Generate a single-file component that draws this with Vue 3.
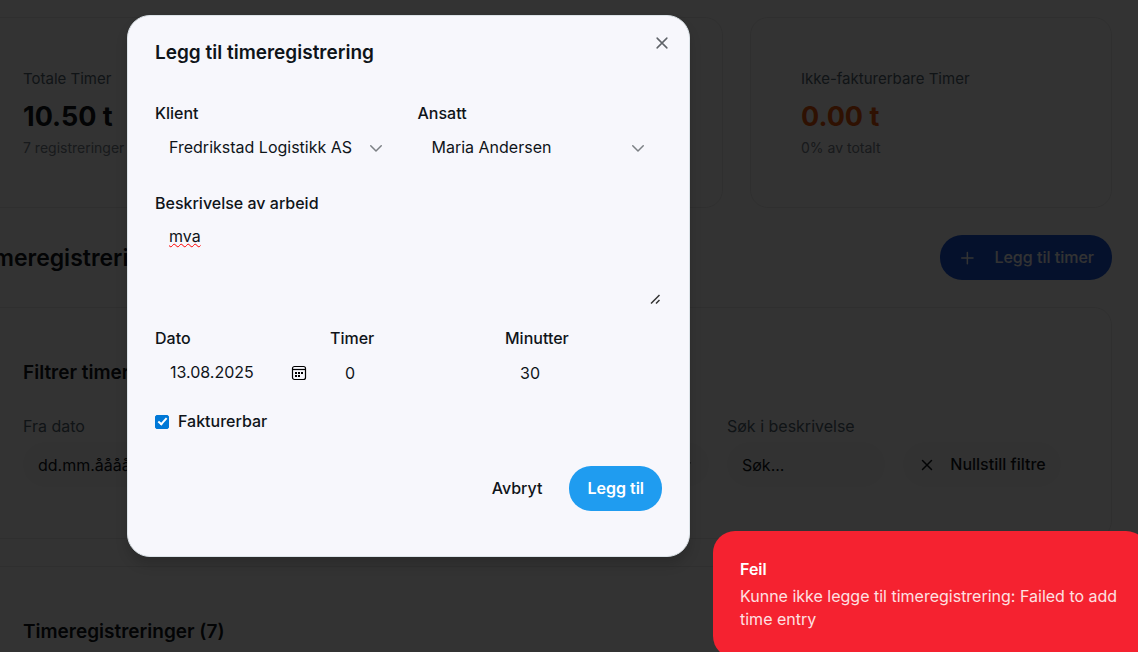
<script setup>
import { ref } from 'vue'

const stats = [
  { label: 'Totale Timer', value: '10.50 t', note: '7 registreringer', tone: 'ink' },
  { label: '', value: '', note: '', tone: 'ink' },
  { label: 'Ikke-fakturerbare Timer', value: '0.00 t', note: '0% av totalt', tone: 'orange' },
]

const client = ref('Fredrikstad Logistikk AS')
const employee = ref('Maria Andersen')
const description = ref('mva')
const date = ref('13.08.2025')
const hours = ref('0')
const minutes = ref('30')
const billable = ref(true)
</script>

<template>
  <div class="screen">
    <main class="page">
      <section class="stats">
        <article v-for="(s, i) in stats" :key="i" class="card stat">
          <p class="stat-label">{{ s.label }}</p>
          <p class="stat-value" :class="s.tone">{{ s.value }}</p>
          <p class="stat-note">{{ s.note }}</p>
        </article>
      </section>

      <div class="page-head">
        <h1>Timeregistrering</h1>
        <button type="button" class="btn add">
          <svg width="18" height="18" viewBox="0 0 24 24" fill="none" stroke="currentColor" stroke-width="2" stroke-linecap="round"><path d="M5 12h15M12.500 4.500v15" /></svg>
          Legg til timer
        </button>
      </div>

      <section class="card panel">
        <h2>Filtrer timer</h2>
        <div class="filter-grid">
          <div class="field from">
            <label for="from">Fra dato</label>
            <input id="from" class="control" type="text" value="dd.mm.åååå" />
          </div>
          <div class="field pick">
            <div class="select-wrap">
              <select class="control" aria-label="Ansatt"></select>
              <svg class="chevron" width="18" height="18" viewBox="0 0 24 24" fill="none" stroke="currentColor" stroke-width="2" stroke-linecap="round" stroke-linejoin="round"><path d="m5 9 7 7 7-7" /></svg>
            </div>
          </div>
          <div class="field search">
            <label for="search">Søk i beskrivelse</label>
            <input id="search" class="control" type="text" placeholder="Søk..." />
          </div>
          <button type="button" class="btn reset">
            <svg width="18" height="18" viewBox="0 0 24 24" fill="none" stroke="currentColor" stroke-width="2" stroke-linecap="round"><path d="M18 6 6 18M6 6l12 12" /></svg>
            Nullstill filtre
          </button>
        </div>
      </section>

      <section class="card panel">
        <h2>Timeregistreringer (7)</h2>
        <div class="rule"></div>
      </section>
    </main>

    <div class="overlay"></div>

    <form class="dialog" role="dialog" aria-labelledby="dialog-title" @submit.prevent>
      <button type="button" class="close" aria-label="Lukk">
        <svg width="18" height="18" viewBox="0 0 24 24" fill="none" stroke="currentColor" stroke-width="2" stroke-linecap="round"><path d="M18.500 5.500 5.500 18.500M5.500 5.500l13 13" /></svg>
      </button>
      <h2 id="dialog-title">Legg til timeregistrering</h2>

      <div class="row two">
        <div class="field">
          <label for="client">Klient</label>
          <div class="select-wrap">
            <select id="client" v-model="client" class="control"><option>Fredrikstad Logistikk AS</option></select>
            <svg class="chevron" width="18" height="18" viewBox="0 0 24 24" fill="none" stroke="currentColor" stroke-width="2" stroke-linecap="round" stroke-linejoin="round"><path d="m5 9 7 7 7-7" /></svg>
          </div>
        </div>
        <div class="field">
          <label for="employee">Ansatt</label>
          <div class="select-wrap">
            <select id="employee" v-model="employee" class="control"><option>Maria Andersen</option></select>
            <svg class="chevron" width="18" height="18" viewBox="0 0 24 24" fill="none" stroke="currentColor" stroke-width="2" stroke-linecap="round" stroke-linejoin="round"><path d="m5 9 7 7 7-7" /></svg>
          </div>
        </div>
      </div>

      <div class="field">
        <label for="description">Beskrivelse av arbeid</label>
        <div class="area-wrap">
          <textarea id="description" v-model="description" class="control area"></textarea>
          <svg class="grip" width="10" height="10" viewBox="0 0 10 10" fill="none" stroke="currentColor" stroke-width="1.500"><path d="M1 9.500l8.500-8.500M6 9.500l3.500-3.500" /></svg>
        </div>
      </div>

      <div class="row three">
        <div class="field">
          <label for="date">Dato</label>
          <div class="date control">
            <input id="date" v-model="date" type="text" />
            <button type="button" aria-label="Velg dato">
              <svg width="16" height="16" viewBox="0 0 16 16" fill="none" stroke="currentColor">
                <rect x="1.500" y="1.500" width="13" height="13" rx="2" stroke-width="1.200" />
                <path d="M1.500 4.500h13" stroke-width="1.200" />
                <g fill="currentColor" stroke="none">
                  <rect x="4" y="7" width="2" height="2" /><rect x="7" y="7" width="2" height="2" /><rect x="10" y="7" width="2" height="2" />
                  <rect x="4" y="10" width="2" height="2" /><rect x="7" y="10" width="2" height="2" />
                </g>
              </svg>
            </button>
          </div>
        </div>
        <div class="field">
          <label for="hours">Timer</label>
          <input id="hours" v-model="hours" class="control" type="text" inputmode="numeric" />
        </div>
        <div class="field">
          <label for="minutes">Minutter</label>
          <input id="minutes" v-model="minutes" class="control" type="text" inputmode="numeric" />
        </div>
      </div>

      <div class="check">
        <input id="billable" v-model="billable" type="checkbox" />
        <label for="billable">Fakturerbar</label>
      </div>

      <div class="actions">
        <button type="button" class="btn cancel">Avbryt</button>
        <button type="submit" class="btn submit">Legg til</button>
      </div>
    </form>

    <div class="toast" role="alert">
      <strong>Feil</strong>
      <p>Kunne ikke legge til timeregistrering: Failed to add time entry</p>
    </div>
  </div>
</template>

<style>
body {
  overflow: hidden;
  background: #fff;
}
</style>

<style scoped>
.screen {
  position: relative;
  height: 100vh;
  overflow: hidden;
  color: #0f1419;
  font: 16px/23px Inter, "Liberation Sans", sans-serif;
}
.screen *,
.screen *::before {
  box-sizing: border-box;
}
h1, h2, p {
  margin: 0;
}
h1 {
  font-size: 23px;
  font-weight: 600;
  line-height: 32px;
}
h2 {
  font-size: 19px;
  font-weight: 600;
  line-height: 28px;
}
button, input, select, textarea {
  font: inherit;
  color: inherit;
}
button {
  cursor: pointer;
}

.page {
  display: flex;
  flex-direction: column;
  gap: 27px;
  margin-left: -28px;
  padding: 17px 26px 0 0;
}
.card {
  border: 1px solid #ebebeb;
  border-radius: 18px;
  padding: 49px 50px;
}
.stats {
  display: grid;
  grid-template-columns: repeat(3, 1fr);
  gap: 27px;
}
.stat-label {
  min-height: 23px;
  font-size: 15px;
  color: #536471;
}
.stat-value {
  min-height: 36px;
  margin: 9px 0 3px;
  font-size: 27px;
  font-weight: 700;
  line-height: 36px;
}
.stat-value.orange {
  color: #ea580c;
}
.stat-note {
  min-height: 20px;
  font-size: 14px;
  line-height: 20px;
  color: #77818a;
}

.page-head {
  display: flex;
  align-items: center;
  justify-content: space-between;
}
.btn {
  display: flex;
  align-items: center;
  justify-content: center;
  height: 45px;
  border: 0;
  border-radius: 22px;
  background: transparent;
  font-weight: 500;
}
.add {
  gap: 18px;
  padding: 0 18px;
  background: #1a56db;
  color: #fff;
}

.panel {
  padding: 51px 50px;
}
.filter-grid {
  display: grid;
  grid-template-columns: repeat(6, minmax(0, 1fr));
  align-items: end;
  gap: 18px;
  margin-top: 28px;
}
.filter-grid .field {
  gap: 4px;
  color: #536471;
}
.filter-grid .control {
  background: #fafafa;
  color: #0f1419;
}
.filter-grid .control::placeholder {
  color: #0f1419;
  opacity: 1;
}
.pick { grid-column: 4; }
.search { grid-column: 5; }
.reset {
  grid-column: 6;
  gap: 14px;
  padding: 0;
  background: #fafafa;
}
.rule {
  height: 1px;
  margin: 6px -50px 0;
  background: #ebebeb;
}

.overlay {
  position: absolute;
  inset: 0;
  background: rgba(0, 0, 0, 0.8);
}

.dialog {
  position: absolute;
  top: 15px;
  left: 127px;
  width: 563px;
  padding: 23px 27px 45px;
  border: 1px solid #dce3e8;
  border-radius: 23px;
  background: #f7f7fc;
  box-shadow: 0 8px 12px rgba(0, 0, 0, 0.15);
}
.dialog h2 {
  margin-bottom: 35px;
}
.close {
  position: absolute;
  top: 18px;
  right: 18px;
  display: flex;
  padding: 0;
  border: 0;
  background: none;
  color: #5f6368;
}
.row {
  display: grid;
  gap: 18px;
}
.two { grid-template-columns: repeat(2, minmax(0, 1fr)); }
.three { grid-template-columns: repeat(3, minmax(0, 1fr)); }
.row + .field,
.field + .row {
  margin-top: 22px;
}
.field {
  display: flex;
  flex-direction: column;
}
.dialog .field label,
.check label {
  font-weight: 500;
}
.control {
  width: 100%;
  height: 45px;
  padding: 0 14px;
  border: 1px solid transparent;
  border-radius: 22px;
  background: transparent;
  outline: none;
}
.select-wrap,
.area-wrap {
  position: relative;
}
select.control {
  display: block;
  padding: 0 13px;
  appearance: none;
}
.chevron {
  position: absolute;
  top: 14px;
  right: 15px;
  color: #7c8084;
  pointer-events: none;
}
.area {
  display: block;
  height: 90px;
  padding: 9px 13px;
  border-radius: 8px;
  resize: none;
  text-decoration: underline wavy #f00 1px;
}
.grip {
  position: absolute;
  right: 2px;
  bottom: 1px;
  color: #333;
  pointer-events: none;
}
.date {
  display: flex;
  align-items: center;
  padding: 0 4px 0 14px;
}
.date input {
  flex: 1;
  min-width: 0;
  padding: 0;
  border: 0;
  background: none;
  outline: none;
}
.date button {
  display: flex;
  padding: 0;
  border: 0;
  background: none;
  color: #000;
}
.check {
  display: flex;
  align-items: center;
  gap: 9px;
  margin-top: 15px;
}
.check input {
  position: relative;
  width: 14px;
  height: 14px;
  margin: 0;
  border: 1px solid #0078d7;
  border-radius: 2px;
  appearance: none;
}
.check input:checked {
  background: #0078d7;
}
.check input:checked::before {
  content: "";
  position: absolute;
  top: 0;
  left: 4px;
  width: 5px;
  height: 9px;
  border: solid #fff;
  border-width: 0 2px 2px 0;
  transform: rotate(42deg);
}
.actions {
  display: flex;
  justify-content: flex-end;
  gap: 9px;
  margin-top: 33px;
}
.cancel,
.submit {
  padding: 0 18px;
}
.submit {
  background: #1f9cf0;
  color: #fff;
  font-weight: 600;
}

.toast {
  position: absolute;
  top: 531px;
  right: -10px;
  width: 435px;
  padding: 27px;
  border-radius: 22px;
  background: #f52230;
  color: #fff;
}
.toast strong {
  display: block;
  margin-bottom: 4px;
  font-weight: 600;
}
.toast p {
  color: #fee0e2;
}
</style>
